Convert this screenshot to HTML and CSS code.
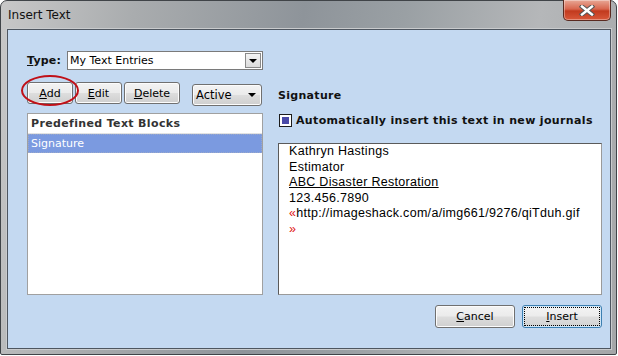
FILE: index.html
```html
<!DOCTYPE html>
<html>
<head>
<meta charset="utf-8">
<link rel="stylesheet" href="styles.css">
</head>
<body>
<div class="window">
  <div class="titlebar">
    <span class="title">Insert Text</span>
    <div class="close"><svg width="16" height="11" viewBox="0 0 16 11"><path d="M3 1.5 L13 9.5 M13 1.5 L3 9.5" stroke="#555" stroke-width="4.4" stroke-linecap="square"/><path d="M3 1.5 L13 9.5 M13 1.5 L3 9.5" stroke="#fff" stroke-width="2.4" stroke-linecap="square"/></svg></div>
  </div>
  <div class="panel">
    <div class="main">
      <div class="leftcol">
        <div class="typerow">
          <span class="label"><u>T</u>ype:</span>
          <div class="select">
            <span class="selval">My Text Entries</span>
            <span class="selbtn"><span class="tri"></span></span>
          </div>
        </div>
        <div class="btnrow">
          <div class="addwrap">
            <button class="btn small"><u>A</u>dd</button>
            <span class="ring"></span>
          </div>
          <button class="btn small edit"><u>E</u>dit</button>
          <button class="btn small del"><u>D</u>elete</button>
          <div class="combo"><span>Active</span><span class="tri"></span></div>
        </div>
        <div class="list">
          <div class="listhead">Predefined Text Blocks</div>
          <div class="listrow sel">Signature</div>
        </div>
      </div>
      <div class="rightcol">
        <div class="heading">Signature</div>
        <div class="check"><span class="box"><span class="fill"></span></span><span>Automatically insert this text in new journals</span></div>
        <div class="textbox">
          <div>Kathryn Hastings</div>
          <div>Estimator</div>
          <div><u>ABC Disaster Restoration</u></div>
          <div>123.456.7890</div>
          <div><span class="mark">«</span>http://imageshack.com/a/img661/9276/qiTduh.gif</div>
          <div><span class="mark">»</span></div>
        </div>
      </div>
    </div>
    <div class="footer">
      <button class="btn big"><u>C</u>ancel</button>
      <button class="btn big default"><span class="focus"><u>I</u>nsert</span></button>
    </div>
  </div>
</div>
</body>
</html>
```
FILE: styles.css
```css
html, body { margin: 0; padding: 0; background: #fff; }
body { width: 618px; height: 356px; overflow: hidden; font-family: "DejaVu Sans", sans-serif; }

.window {
  box-sizing: border-box;
  width: 617px;
  height: 355px;
  border: 1px solid #404448;
  border-radius: 7px 7px 2px 2px;
  background: linear-gradient(100deg, #c8c8c8 0%, #a9acae 20%, #8e949a 45%, #9aa0a4 60%, #b5b7b9 80%, #a4a6a8 100%);
  display: flex;
  flex-direction: column;
}

.titlebar {
  height: 28px;
  position: relative;
  display: flex;
  align-items: center;
}
.title {
  font-family: "DejaVu Sans", sans-serif;
  font-size: 12px;
  color: #111;
  margin-left: 7px;
  margin-top: -1px;
}
.close {
  position: absolute;
  right: 5px;
  top: -1px;
  width: 46px;
  height: 20px;
  border: 1px solid #5a2a20;
  border-top: none;
  border-radius: 0 0 5px 5px;
  background: linear-gradient(#e8a896 0%, #d8664e 45%, #c23a1e 55%, #d8583a 100%);
  display: flex;
  align-items: center;
  justify-content: center;
  box-shadow: inset 0 0 0 1px rgba(255,255,255,0.35);
}

.panel {
  margin: 0 5px 5px 6px;
  flex: 1;
  background: #c4d9f1;
  border: 1px solid #4e5660;
  box-shadow: 0 0 0 1px #c9cbcd;
  display: flex;
  flex-direction: column;
  padding: 21px 0 0 19px;
}

.main {
  display: flex;
  align-items: flex-end;
  gap: 15px;
}

.leftcol {
  width: 236px;
  display: flex;
  flex-direction: column;
}

.typerow {
  display: flex;
  align-items: center;
  height: 19px;
}
.label {
  font-weight: bold;
  font-size: 11px;
  color: #111;
  width: 40px;
  letter-spacing: 0.2px;
}
.select {
  width: 196px;
  height: 19px;
  box-sizing: border-box;
  border: 1px solid #7a7a7a;
  background: #fff;
  display: flex;
  align-items: center;
  justify-content: space-between;
}
.selval {
  font-size: 11px;
  margin-left: 2px;
  color: #000;
}
.selbtn {
  width: 16px;
  height: 15px;
  margin-right: 1px;
  box-sizing: border-box;
  border: 1px solid #8a8a8a;
  background: linear-gradient(#f4f4f4, #dcdcdc);
  display: flex;
  align-items: center;
  justify-content: center;
}
.tri {
  width: 0; height: 0;
  border-left: 4px solid transparent;
  border-right: 4px solid transparent;
  border-top: 4px solid #000;
}

.btnrow {
  display: flex;
  align-items: flex-start;
  margin-top: 12px;
  height: 25px;
}
.addwrap { position: relative; }
.ring {
  position: absolute;
  left: -6px;
  top: -7px;
  width: 54px;
  height: 27px;
  border: 2px solid #c01018;
  border-radius: 50%;
  pointer-events: none;
}

.btn {
  font-family: "DejaVu Sans", sans-serif;
  font-size: 11px;
  color: #000;
  border: 1px solid #707070;
  border-radius: 3px;
  background: linear-gradient(#f3f3f3 0%, #ebebeb 48%, #dddddd 52%, #cfcfcf 100%);
  box-shadow: inset 0 0 0 1px #fcfcfc;
  padding: 0;
  margin: 0;
  display: flex;
  align-items: center;
  justify-content: center;
}
.btn.small { height: 22px; width: 46px; }
.btn.edit { width: 47px; margin-left: 2px; }
.btn.del { width: 56px; margin-left: 2px; }

.combo {
  margin-left: 12px;
  margin-top: 2px;
  width: 70px;
  height: 22px;
  box-sizing: border-box;
  border: 1px solid #707070;
  border-radius: 3px;
  background: linear-gradient(#f3f3f3 0%, #ebebeb 48%, #dddddd 52%, #cfcfcf 100%);
  box-shadow: inset 0 0 0 1px #fcfcfc;
  display: flex;
  align-items: center;
  justify-content: space-between;
  padding: 0 5px 0 3px;
  font-size: 11.5px;
}

.list {
  margin-top: 6px;
  height: 182px;
  box-sizing: border-box;
  border: 1px solid #a0a0a0;
  background: #fff;
}
.listhead {
  height: 19px;
  line-height: 19px;
  font-weight: bold;
  font-size: 11px;
  color: #333;
  padding-left: 3px;
  border-bottom: 1px solid #e2e2e2;
  letter-spacing: 0.35px;
}
.listrow {
  height: 19px;
  line-height: 19px;
  font-size: 11px;
  padding-left: 3px;
}
.listrow.sel {
  background: #7b9ae0;
  color: #fff;
  outline: 1px dotted #9aa8c8;
  outline-offset: -1px;
}

.rightcol {
  width: 324px;
  display: flex;
  flex-direction: column;
}
.heading {
  font-weight: bold;
  font-size: 11px;
  color: #111;
  height: 16px;
  margin-bottom: 1px;
  letter-spacing: 0.3px;
}
.check {
  margin-top: 8px;
  display: flex;
  align-items: center;
  font-weight: bold;
  font-size: 11px;
  color: #111;
  letter-spacing: 0.35px;
}
.box {
  width: 13px;
  height: 13px;
  box-sizing: border-box;
  border: 1px solid #1c1c1c;
  background: #fff;
  padding: 2px;
  margin: 0 4px 0 1px;
  display: flex;
}
.fill { flex: 1; background: #4a4aa8; }

.textbox {
  margin-top: 16px;
  height: 152px;
  box-sizing: border-box;
  border: 1px solid #5a5a5a;
  border-right-color: #9a9a9a;
  border-bottom-color: #9a9a9a;
  background: #fff;
  padding: 0 0 0 10px;
  font-family: "Liberation Sans", Arial, sans-serif;
  font-size: 12.5px;
  line-height: 15.5px;
  color: #000;
  letter-spacing: 0.3px;
}
.mark { color: #e01010; }

.footer {
  display: flex;
  justify-content: flex-end;
  gap: 7px;
  margin-top: 10px;
  padding-right: 8px;
}
.btn.big { width: 80px; height: 23px; }
.btn.default {
  border-color: #3c7fb1;
  box-shadow: inset 0 0 0 1px #cfe6f8;
  background: linear-gradient(#f4f4f4 0%, #ececec 48%, #dedede 52%, #d2d2d2 100%);
}
.focus {
  display: flex;
  align-items: center;
  justify-content: center;
  width: 74px;
  height: 17px;
  outline: 1px dotted #000;
}
```
